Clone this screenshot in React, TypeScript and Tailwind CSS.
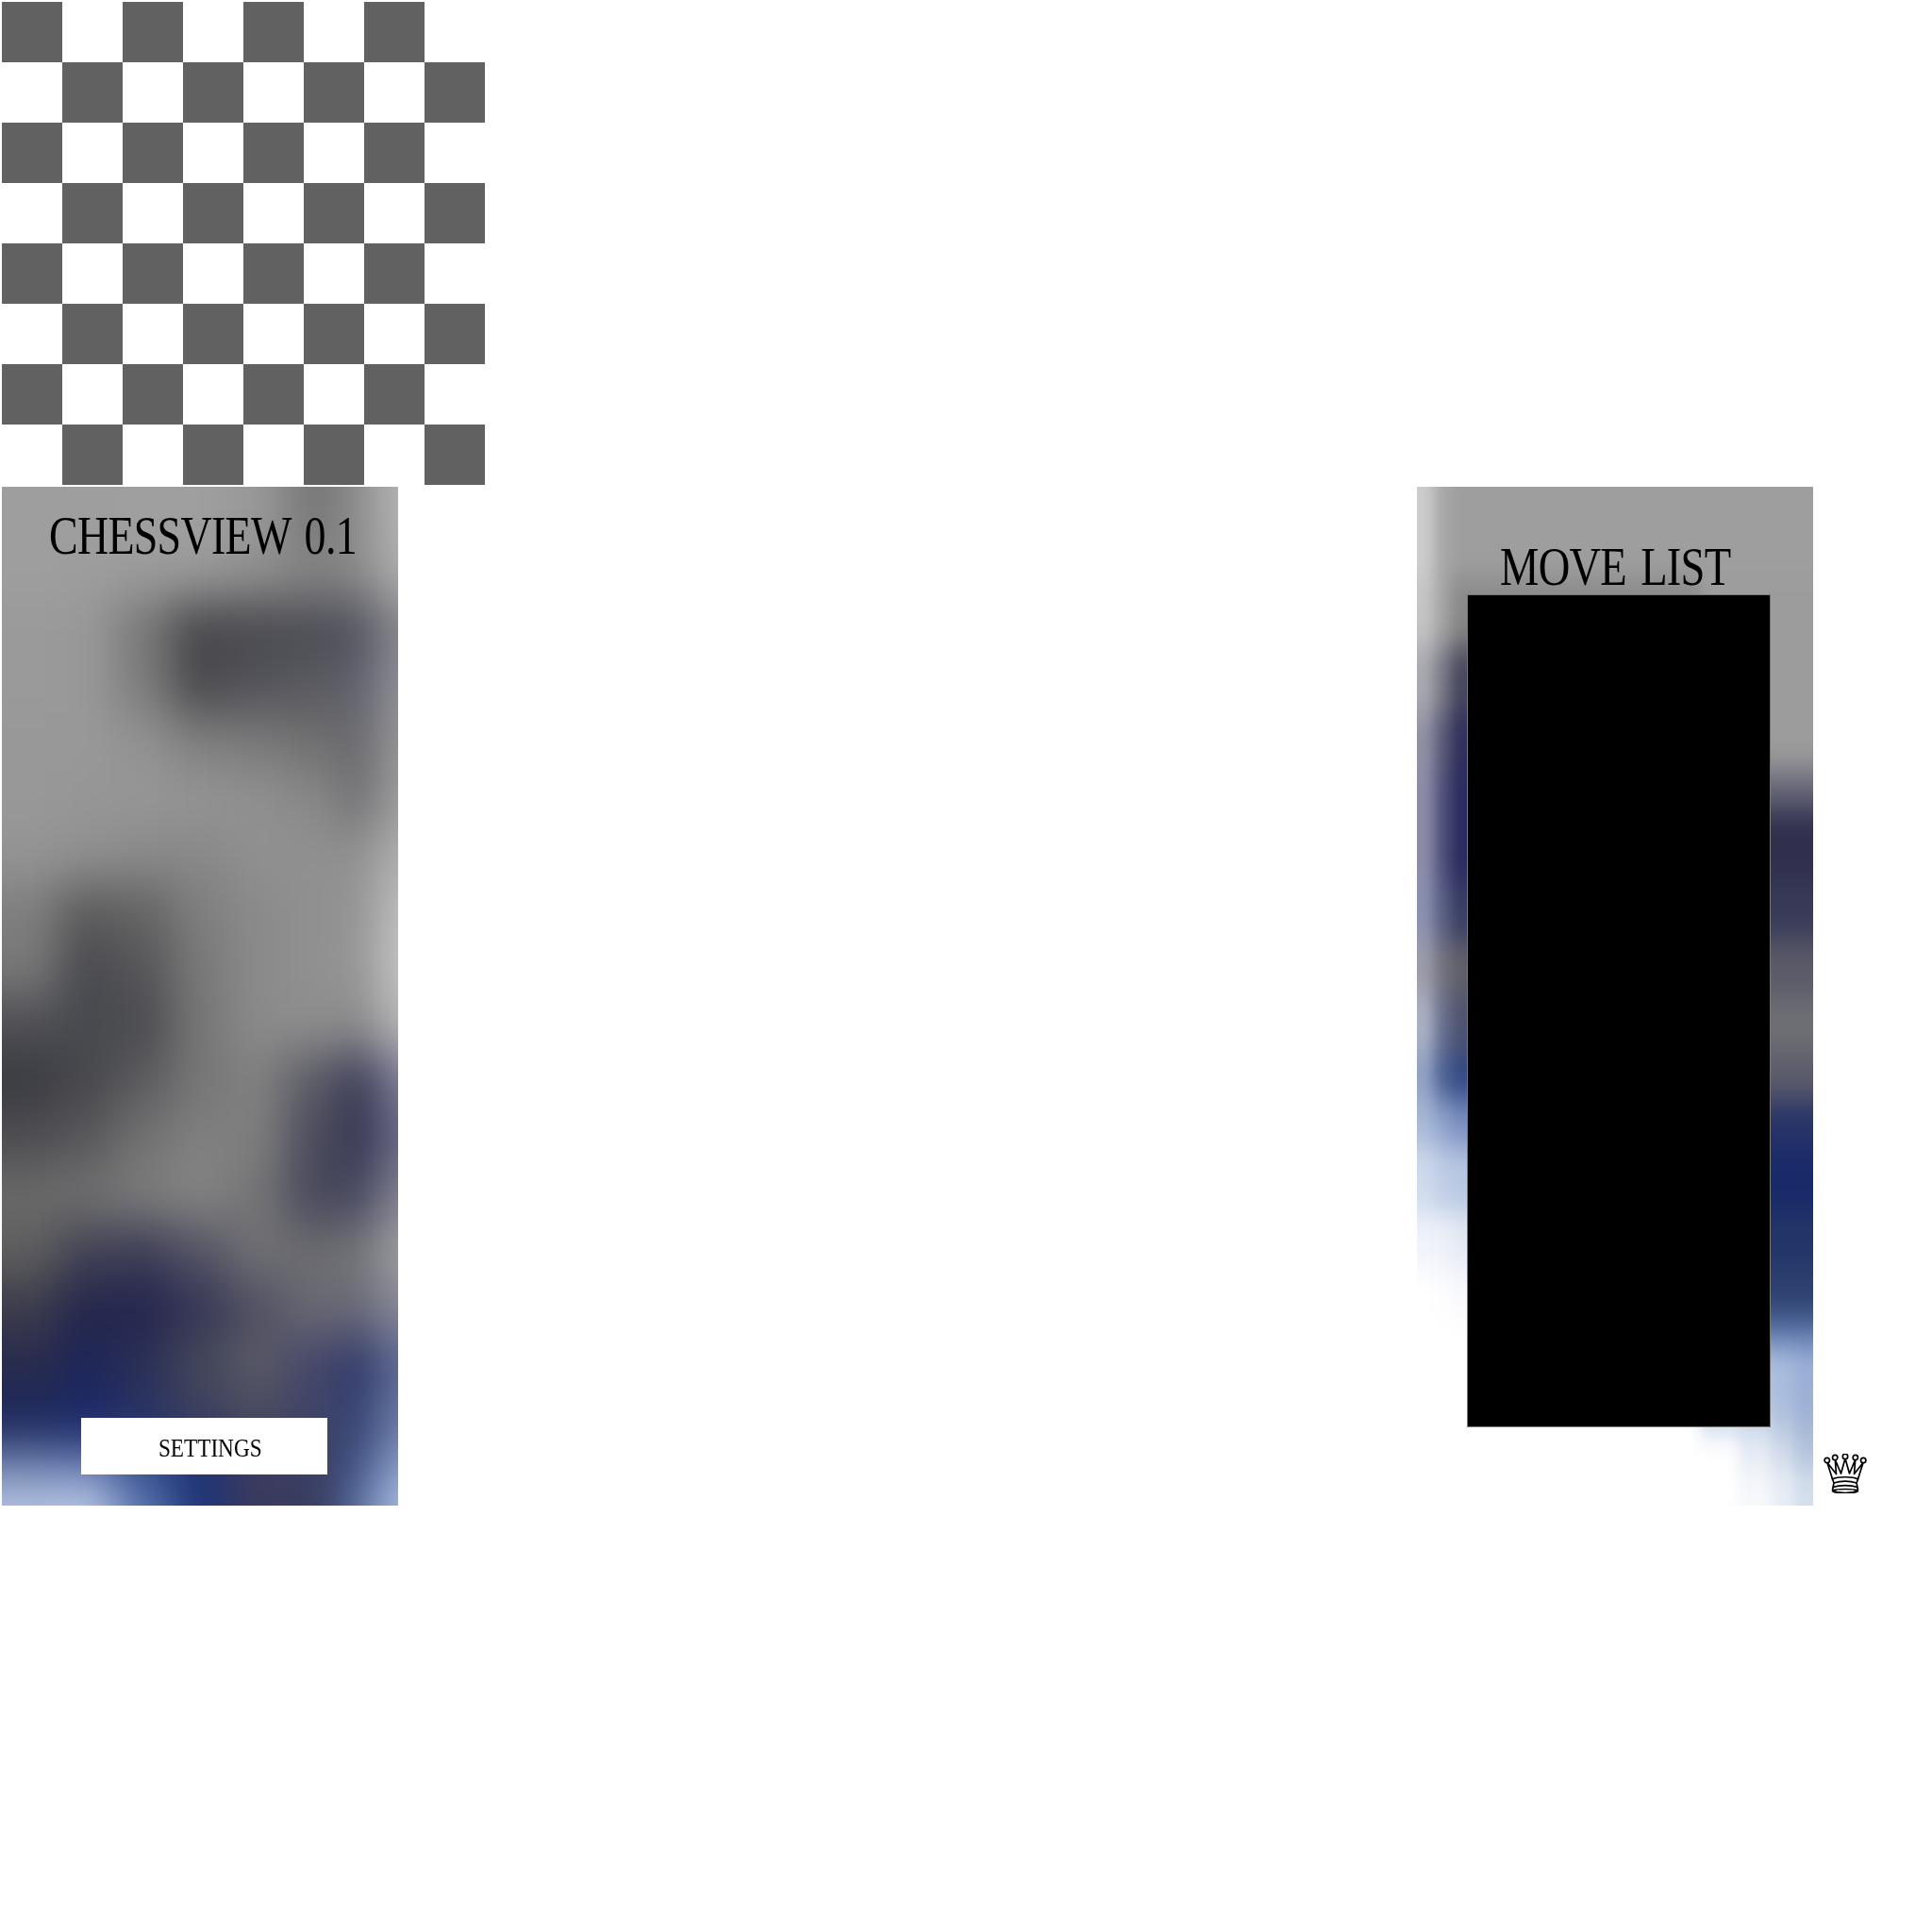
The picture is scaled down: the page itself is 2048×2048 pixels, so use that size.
import React from 'react';

const serif = 'font-["Liberation_Serif",serif]';

// colour samples of the blurred panel art; two digit values are greys
type Art = { xs: number[]; rows: [number, string][]; blur: string };

const leftArt: Art = {
  xs: [0, 60, 120, 180, 240, 300, 360, 400, 420],
  blur: '22 26',
  rows: [
    [0, '9e 9e 9f 9f 98 78 8e b5'],
    [60, '9e 9d 9c 9a 90 85 8a b0'],
    [120, '9a 98 78 48484c 4a4a50 4c4c56 545460 88888e'],
    [180, '9a 98 7c 4a4a4e 52525a 5a5a60 626270 90909a'],
    [240, '98 98 92 80 7a 70 68686e 98'],
    [300, '98 96 96 94 90 88 6e6e72 a0'],
    [360, '94 90 8a 88 90 90 90 b0'],
    [420, '7e 5c 64 7e 8a 90 94 c0'],
    [480, '78 4a4a50 56565a 78 8a 90 96 c4'],
    [540, '4e4e54 464a4e 4c4c50 76 8a 8e 8a b8'],
    [600, '3a3a42 48484c 5c5c60 76 80 5a5a66 363654 808098'],
    [660, '4e4e52 58585c 72 80 7e 4c4c5c 323250 6a6a88'],
    [720, '6a 70 7c 84 747476 48485c 464660 858592'],
    [780, '5e 424254 3e3e56 545464 707074 6c6c70 747478 a0a0a4'],
    [840, '3c3c4c 24264c 24264e 363656 505062 6a6a74 6a6a78 8a8a98'],
    [900, '282a4c 1e2658 2c3056 44485a 5a5a66 45466a 2e3668 606c94'],
    [960, '1c2a5e 1a2a6a 283266 3a3e60 46485e 3e4466 344376 6e7ea4'],
    [1020, '7a8cb8 6f86bb 3a5090 1c2f70 383a60 3a3e62 44568c 8ea4cc'],
    [1060, 'b4c4e2 bccae6 5a78b0 1e367c 3c3a5c 383c60 5c76a8 b0c0e0'],
  ],
};

const rightArt: Art = {
  xs: [0, 18, 36, 53, 300, 340, 375, 400, 420],
  blur: '7 16',
  rows: [
    [0, 'cc a8 9e 9e 9e 9e 9e 9e'],
    [100, 'c4 a4 88 88 9c 9c 9c 9c'],
    [170, 'a8a8b0 7a7a88 48485e 48485e 9c 9c 9c 9c'],
    [240, '9090a4 5c5c78 30305c 30305c 9c 9c 9c 9c'],
    [300, '8c8ca8 50527c 2a2c5e 2a2c5e 68687a 68687a 68687a 68687a'],
    [340, '8c8ca8 50527c 2a2c5e 2a2c5e 30304e 30304e 30304e 30304e'],
    [420, '8a90b0 5a6084 3a3e64 3a3e64 383a58 383a58 383a58 383a58'],
    [480, '9c9ca8 747480 606068 606068 5a5a68 5a5a68 5a5a68 5a5a68'],
    [540, 'aab0c4 6a7090 4e5470 4e5470 6e6e74 6e6e74 6e6e74 6e6e74'],
    [600, '8ea0c4 4e6494 344a84 344a84 5c5c6c 5c5c6c 5c5c6c 5c5c6c'],
    [650, 'a8b8d6 8fa4cc 7c90c0 7c90c0 283468 283468 283468 283468'],
    [700, 'cfdaec c0cde6 b8c8e2 b8c8e2 182a68 182a68 182a68 182a68'],
    [770, 'f0f3fa eef1f8 e4eaf5 e4eaf5 233568 233568 233568 233568'],
    [830, 'ffffff fdfdfe f8f9fc f8f9fc 2e4270 2e4270 2e4270 2e4270'],
    [880, 'ffffff ffffff ffffff ffffff 5a74a8 5a74a8 5a74a8 5a74a8'],
    [910, 'ffffff ffffff ffffff ffffff b0c4e2 b0c4e2 a8bcde 9cb0d8'],
    [970, 'ffffff ffffff ffffff ffffff c0cfe6 c0cfe6 aebfdb 9fb2d2'],
    [1000, 'ffffff ffffff ffffff ffffff ffffff e4eaf4 ced9e9 b2c2dc'],
    [1040, 'ffffff ffffff ffffff ffffff ffffff f6f8fb e8edf5 d4deec'],
  ],
};

const toColor = (c: string) => (c.length === 2 ? `#${c}${c}${c}` : `#${c}`);

const PanelArt: React.FC<{ id: string; art: Art }> = ({ id, art }) => {
  const { xs, rows, blur } = art;
  return (
    <svg className="absolute inset-0" width="420" height="1080" viewBox="0 0 420 1080">
      <defs>
        <filter
          id={id}
          filterUnits="userSpaceOnUse"
          x="-150"
          y="-150"
          width="720"
          height="1380"
          colorInterpolationFilters="sRGB"
        >
          <feGaussianBlur stdDeviation={blur} />
        </filter>
      </defs>
      <g filter={`url(#${id})`}>
        {rows.map(([top, colors], r) => {
          // outer cells run past the edge so the blur does not fade out there
          const y0 = r === 0 ? -120 : top;
          const y1 = r === rows.length - 1 ? 1200 : rows[r + 1][0];
          return colors.split(' ').map((c, i) => {
            const x0 = i === 0 ? -120 : xs[i];
            const x1 = i === xs.length - 2 ? 540 : xs[i + 1];
            return <rect key={`${r}-${i}`} x={x0} y={y0} width={x1 - x0} height={y1 - y0} fill={toColor(c)} />;
          });
        })}
      </g>
    </svg>
  );
};

const Board: React.FC = () => (
  <div className="grid grid-cols-[repeat(8,64px)] grid-rows-[repeat(8,64px)] ml-[2px] mt-[2px] w-[512px]">
    {Array.from({ length: 64 }).map((_, i) => {
      const dark = (Math.floor(i / 8) + (i % 8)) % 2 === 0;
      return <div key={i} className={dark ? 'bg-[#616161]' : 'bg-white'} />;
    })}
  </div>
);

const Queen: React.FC = () => (
  <svg width="46" height="42" viewBox="0 0 46 42" fill="none" stroke="black" strokeWidth="1.7" strokeLinejoin="round">
    <path
      d="M9.5 27 L4 9.5 L13.5 21.5 L12.3 6.3 L18.5 21 L23 5 L27.5 21 L33.7 6.3 L32.5 21.5 L42 9.5 L36.5 27"
      fill="white"
    />
    <circle cx="3.8" cy="7" r="2.7" fill="white" />
    <circle cx="12.2" cy="4" r="2.7" fill="white" />
    <circle cx="23" cy="2.9" r="2.7" fill="white" />
    <circle cx="33.8" cy="4" r="2.7" fill="white" />
    <circle cx="42.2" cy="7" r="2.7" fill="white" />
    <path d="M9.5 27 C15 24 31 24 36.5 27 L35 31 L36 36 L36.5 39 C30 42.5 16 42.5 9.5 39 L10 36 L11 31 Z" fill="white" />
    <path d="M11 31 C18 28.5 28 28.5 35 31" />
    <path d="M10 35.5 C17 33 29 33 36 35.5" />
    <path d="M9.5 39 C16 37 30 37 36.5 39" strokeWidth="1.4" />
    <path d="M9.5 39.5 C16 42.8 30 42.8 36.5 39.5" strokeWidth="2.2" />
  </svg>
);

export default function App() {
  return (
    <div className={`w-[2048px] h-[2048px] bg-white text-black ${serif}`}>
      <Board />
      <div className="flex mt-[2px]">
        <aside className="relative ml-[2px] w-[420px] h-[1080px] overflow-hidden flex flex-col">
          <PanelArt id="left-art" art={leftArt} />
          <h1 className="relative ml-[50px] pt-[24px] text-[56px] leading-[56px] font-normal tracking-[-0.015em] [word-spacing:5px] scale-x-[0.82] origin-left whitespace-nowrap">
            CHESSVIEW 0.1
          </h1>
          <button className="relative mt-auto mb-[33px] ml-[84px] w-[261px] h-[60px] bg-white flex items-center justify-center pl-[12px] pt-[4px]">
            <span className="text-[27px] leading-[32px] scale-x-[0.86]">SETTINGS</span>
          </button>
        </aside>
        <section className="relative ml-[1080px] w-[420px] h-[1080px] overflow-hidden flex flex-col">
          <PanelArt id="right-art" art={rightArt} />
          <h2 className="relative ml-[88px] pt-[57px] text-[56px] leading-[56px] font-normal tracking-[-0.015em] [word-spacing:5px] scale-x-[0.83] origin-left whitespace-nowrap">
            MOVE LIST
          </h2>
          <div className="relative mt-[1px] ml-[53px] w-[322px] h-[883px] bg-black border border-[#777777]" />
        </section>
        <div className="self-end ml-[11px] mb-[13px]">
          <Queen />
        </div>
      </div>
    </div>
  );
}
